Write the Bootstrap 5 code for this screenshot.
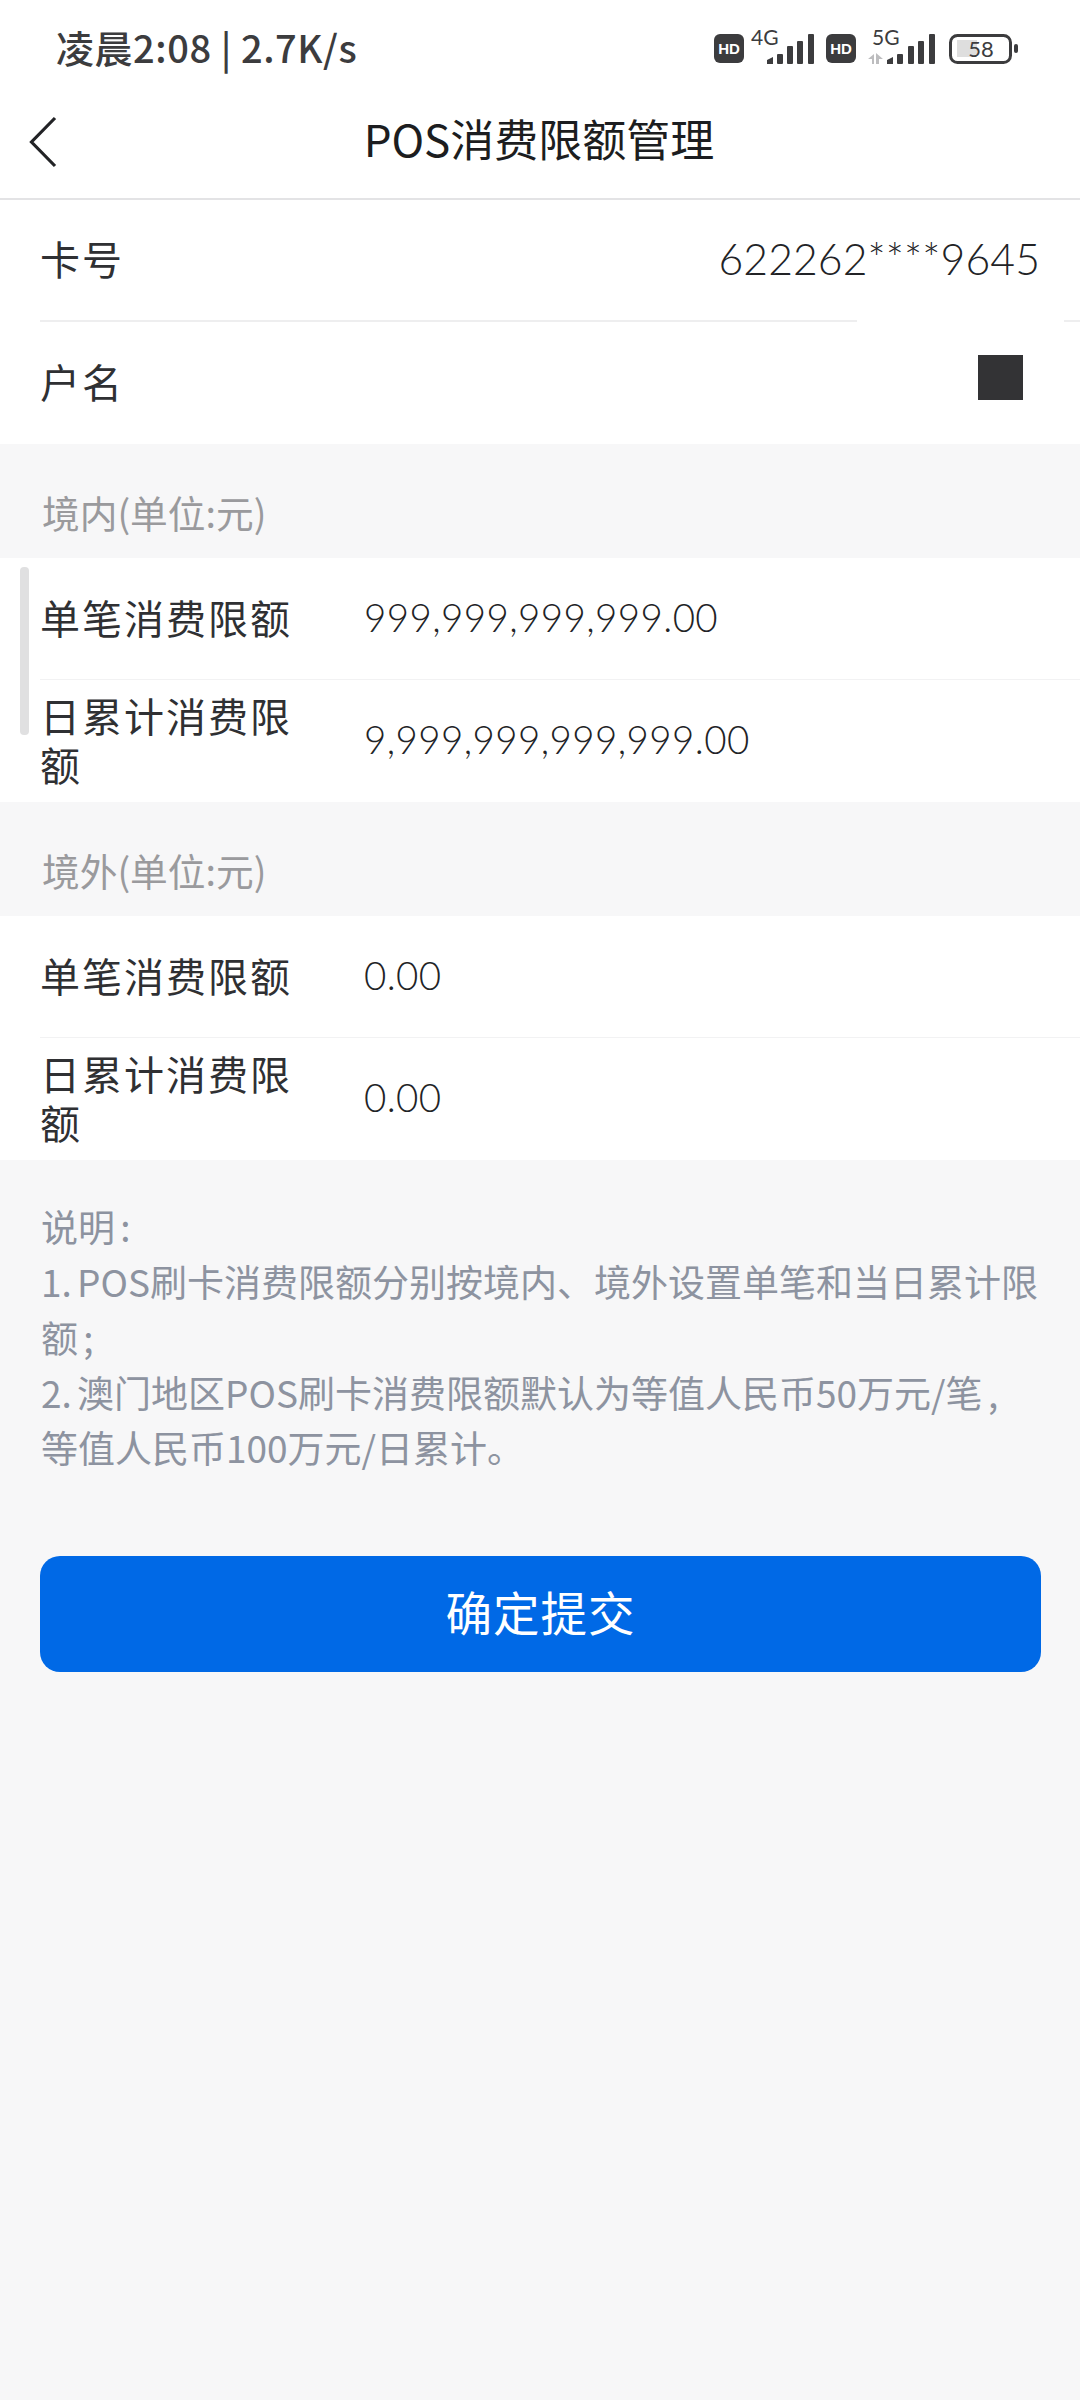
<!doctype html>
<html lang="zh">
<head>
<meta charset="utf-8">
<title>POS消费限额管理</title>
<link rel="stylesheet" href="https://cdn.jsdelivr.net/npm/bootstrap@5.3.0/dist/css/bootstrap.min.css">
<style>
body{background:#f7f7f8;font-family:"Noto Sans CJK SC","Noto Sans",sans-serif;width:1080px;height:2400px;position:relative;overflow:hidden;color:#2f3033}
.statusbar{height:96px;background:#fff;padding:0 56px 0 56px;color:#3c3c3e}
.status-text{font-size:38px;font-weight:500;line-height:1;margin-top:-2px;letter-spacing:.55px}
.topbar{height:104px;background:#fff;border-bottom:2px solid #e3e3e5;position:relative}
.topbar-title{font-size:44px;line-height:1;color:#1c1d20;margin-top:-18px;margin-right:2px}
.back-btn{position:absolute;left:28px;top:20px}
.row-item{background:#fff;padding-left:40px}
.row-inner{height:122px;font-size:40px;line-height:49px;letter-spacing:2px;padding-bottom:3px}
.rule{border-bottom:1px solid #f2f2f3}
.rule-strong{border-bottom:2px solid #eeeeef}
.rule-gap{position:absolute;left:857px;top:320px;width:207px;height:4px;background:#fff}
.num{font-family:"Lato","Noto Sans",sans-serif;font-weight:300;color:#222326}
.num-right{padding-right:40px;font-size:42.7px;letter-spacing:.1px}
.num-left{font-size:38.5px;letter-spacing:.4px}
.label-col{width:260px;margin-right:64px;flex:none}
.masked{width:45px;height:45px;background:#333335;margin-right:57px;margin-top:-8px}
.section-head{height:114px;padding:43px 0 0 42px;font-size:37.7px;line-height:1.3;color:#9a9a9d}
.notes{padding:39px 36px 0 41px;font-size:37px;line-height:55.3px;color:#8d93a0;word-spacing:-3px}
.submit{background:#0069e6;border:0;border-radius:20px;margin:81px 39px 0 40px;height:116px;width:1001px;font-size:46.5px;letter-spacing:1px;color:#fff;display:block;padding:0 0 8px}
.scroll-thumb{position:absolute;left:20px;top:567px;width:9px;height:168px;border-radius:4px;background:#e0e0e1}
</style>
</head>
<body>
<header class="statusbar d-flex justify-content-between align-items-center">
  <div class="status-text">凌晨2:08 | 2.7K/s</div>
  <svg width="310" height="56" viewBox="0 -8 310 56" aria-label="状态栏图标" role="img">
    <g fill="#3c3c3e">
      <rect x="0" y="6" width="30" height="29" rx="6"/>
      <text x="15" y="26" text-anchor="middle" font-family="Liberation Sans" font-size="15" font-weight="700" fill="#fff">HD</text>
      <text x="37" y="17" font-family="Lato" font-size="21">4G</text>
      <path d="M53 32l6-3v7h-6z"/>
      <rect x="63" y="26" width="6" height="10" rx="1"/><rect x="73" y="18" width="6" height="18" rx="1"/><rect x="83" y="13" width="6" height="23" rx="1"/><rect x="94" y="6" width="6" height="30" rx="1"/>
      <rect x="112" y="6" width="30" height="29" rx="6"/>
      <text x="127" y="26" text-anchor="middle" font-family="Liberation Sans" font-size="15" font-weight="700" fill="#fff">HD</text>
      <text x="158" y="17" font-family="Lato" font-size="21">5G</text>
      <path d="M173 32l6-3v7h-6z"/>
      <rect x="183" y="26" width="6" height="10" rx="1"/><rect x="194" y="18" width="6" height="18" rx="1"/><rect x="204" y="13" width="6" height="23" rx="1"/><rect x="215" y="6" width="6" height="30" rx="1"/>
      <path d="M154 31l6-5v10h-2v-5zM169 31h-4v5h-3V25z" fill="#bdbdbf"/>
      <rect x="236.500" y="7.500" width="60" height="27" rx="7" fill="none" stroke="#3c3c3e" stroke-width="3"/>
      <rect x="243" y="12" width="20" height="17" fill="#dedede"/>
      <rect x="300" y="16" width="4" height="9" rx="2"/>
      <text x="267" y="29" text-anchor="middle" font-family="Lato" font-size="22">58</text>
    </g>
  </svg>
</header>
<nav class="topbar d-flex align-items-center justify-content-center">
  <svg class="back-btn" width="30" height="52" viewBox="0 0 30 52" aria-label="返回" role="img"><path d="M27 2L3.500 26 27 50" fill="none" stroke="#222326" stroke-width="3.200"/></svg>
  <div class="topbar-title">POS消费限额管理</div>
</nav>
<main>
  <section>
    <div class="row-item"><div class="row-inner rule-strong d-flex justify-content-between align-items-center"><span>卡号</span><span class="num num-right">622262****9645</span></div></div>
    <div class="row-item"><div class="row-inner d-flex justify-content-between align-items-center"><span>户名</span><span class="masked"></span></div></div>
  </section>
  <div class="section-head">境内(单位:元)</div>
  <section>
    <div class="row-item"><div class="row-inner rule d-flex align-items-center"><span class="label-col">单笔消费限额</span><span class="num num-left">999,999,999,999.00</span></div></div>
    <div class="row-item"><div class="row-inner d-flex align-items-center"><span class="label-col">日累计消费限额</span><span class="num num-left">9,999,999,999,999.00</span></div></div>
  </section>
  <div class="section-head">境外(单位:元)</div>
  <section>
    <div class="row-item"><div class="row-inner rule d-flex align-items-center"><span class="label-col">单笔消费限额</span><span class="num num-left">0.00</span></div></div>
    <div class="row-item"><div class="row-inner d-flex align-items-center"><span class="label-col">日累计消费限额</span><span class="num num-left">0.00</span></div></div>
  </section>
  <div class="notes">说明 :<br>1. POS刷卡消费限额分别按境内、境外设置单笔和当日累计限额 ;<br>2. 澳门地区POS刷卡消费限额默认为等值人民币50万元/笔 ,<br>等值人民币100万元/日累计。</div>
  <button type="button" class="btn submit">确定提交</button>
</main>
<div class="rule-gap"></div>
<div class="scroll-thumb"></div>
<script src="https://cdn.jsdelivr.net/npm/bootstrap@5.3.0/dist/js/bootstrap.bundle.min.js"></script>
</body>
</html>
